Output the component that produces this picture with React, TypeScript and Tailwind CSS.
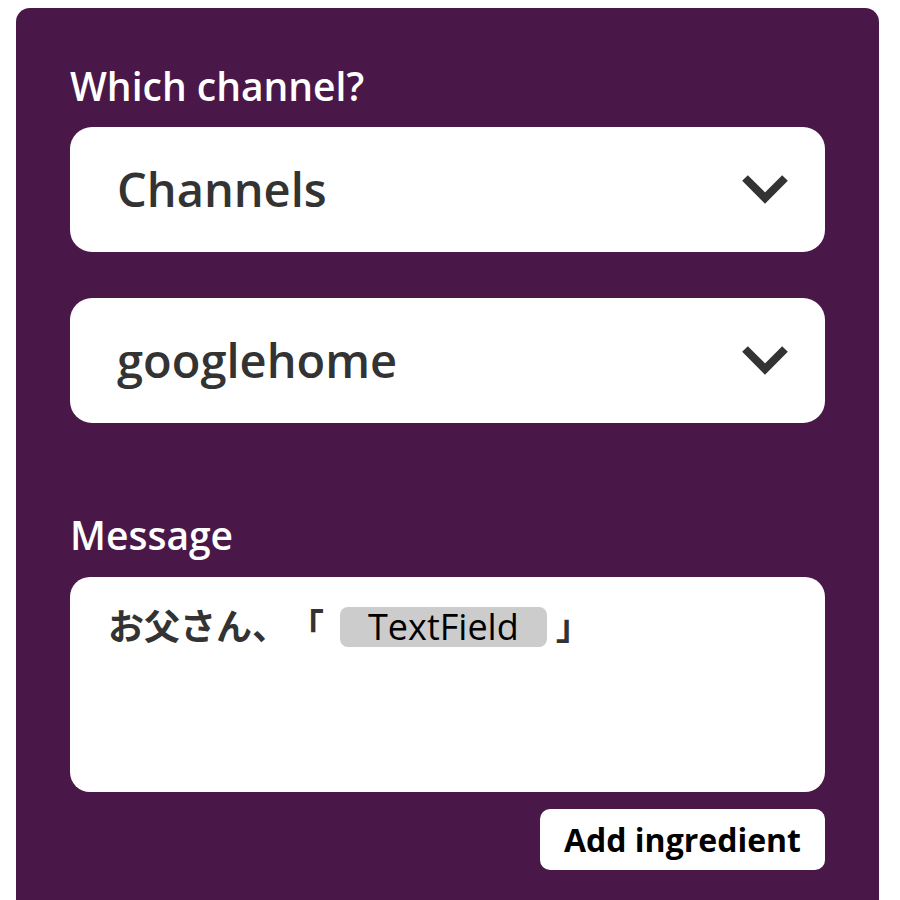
import { ReactNode } from "react";

const Chevron = () => (
  <svg width="48" height="34" viewBox="0 0 48 34" className="shrink-0">
    <polyline
      points="4,5 24,25 44,5"
      fill="none"
      stroke="#333333"
      strokeWidth="8"
      strokeLinejoin="miter"
    />
  </svg>
);

const Label = ({ children }: { children: ReactNode }) => (
  <div className="text-[39px] font-semibold text-white leading-none">{children}</div>
);

const Select = ({ value }: { value: string }) => (
  <div className="flex h-[125px] items-center justify-between rounded-[22px] bg-white pl-[47px] pr-[36px]">
    <span className="text-[47px] font-semibold text-[#333333]">{value}</span>
    <Chevron />
  </div>
);

const App = () => {
  return (
    <div
      className="min-h-[900px] bg-white pl-4 pr-[21px] pt-2"
      style={{ fontFamily: "'Open Sans', 'Noto Sans CJK JP', sans-serif" }}
    >
      <div className="flex h-[892px] flex-col rounded-t-[14px] bg-[#4a1848] px-[54px] pt-[58px]">
        <Label>Which channel?</Label>
        <div className="mt-[22px] flex flex-col gap-[46px]">
          <Select value="Channels" />
          <Select value="googlehome" />
        </div>

        <div className="mt-[92px]">
          <Label>Message</Label>
        </div>
        <div className="mt-[23px] h-[215px] rounded-[20px] bg-white px-[38px] pt-[30px]">
          <div className="flex items-center text-[36px] leading-[40px] font-semibold text-[#333333] [text-spacing-trim:space-all]">
            <span>お父さん、「</span>
            <span className="ml-[16px] mr-[9px] rounded-[8px] bg-[#cccccc] px-[28px] text-[36px] leading-[40px] font-medium text-black">
              TextField
            </span>
            <span>」</span>
          </div>
        </div>
        <div className="mt-[17px] flex justify-end">
          <button className="h-[61px] rounded-[10px] bg-white px-[24px] text-[32px] font-bold text-black">
            Add ingredient
          </button>
        </div>
      </div>
    </div>
  );
};

export default App;
